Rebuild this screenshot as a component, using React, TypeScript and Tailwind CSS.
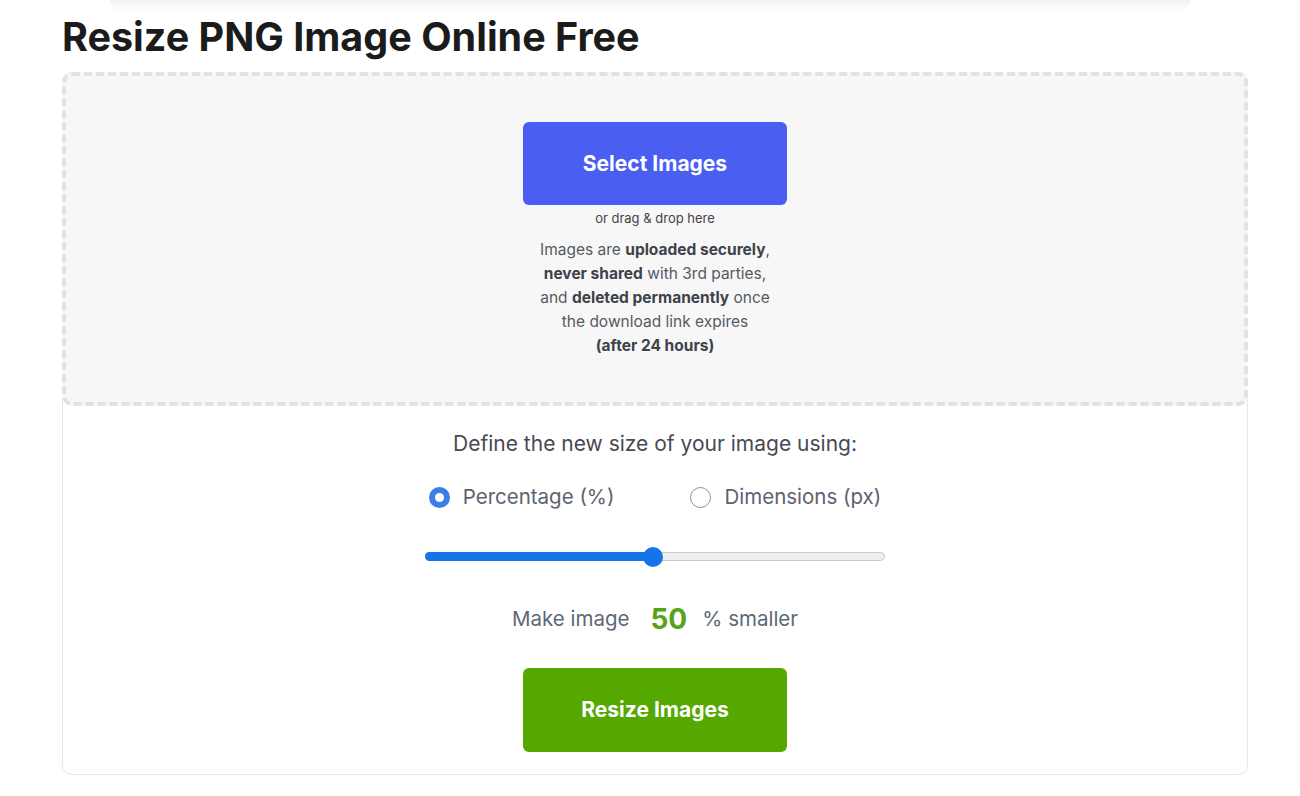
import React, { useState } from 'react';

const App: React.FC = () => {
  const [mode, setMode] = useState<'percent' | 'px'>('percent');
  const [value] = useState(50);

  return (
    <div className="min-h-[796px] bg-white font-['Inter','Liberation_Sans',sans-serif]">
      {/* shadow of the header above */}
      <div className="mx-[110px] h-[12px] rounded-b-[12px] bg-gradient-to-b from-[#f2f2f2] to-white" />

      <div className="ml-[62px] mr-[52px]">
        <h1 className="text-[39.5px] font-bold leading-[46px] text-[#1b1b1b] mt-[2px] mb-[12px]">
          Resize PNG Image Online Free
        </h1>

        <div className="rounded-[10px] border border-[#e8e8e8] bg-white">
          {/* upload zone */}
          <div className="h-[334px] -m-px rounded-[10px] border-4 border-dashed border-[#e2e2e4] bg-[#f7f7f7] flex flex-col items-center pt-[46px]">
            <button className="w-[264px] h-[83px] rounded-[6px] bg-[#4a5ff1] text-white text-[21px] font-bold">
              Select Images
            </button>
            <div className="mt-[5px] text-[13px] leading-[16px] text-[#444]">or drag &amp; drop here</div>
            <p className="mt-[12px] text-center text-[15.5px] leading-[24px] text-[#555a63]">
              Images are <b className="text-[#3e424a]">uploaded securely</b>,<br />
              <b className="text-[#3e424a]">never shared</b> with 3rd parties,<br />
              and <b className="text-[#3e424a]">deleted permanently</b> once<br />
              the download link expires<br />
              <b className="text-[#3e424a]">(after 24 hours)</b>
            </p>
          </div>

          {/* options */}
          <div className="flex flex-col items-center pt-[26px] pb-[22px]">
            <div className="text-[21px] leading-[26px] text-[#474a54]">Define the new size of your image using:</div>

            <div className="mt-[27px] flex items-center gap-[76px] text-[20.5px] leading-[26px] text-[#5d6370]">
              <label className="flex items-center gap-[13px] cursor-pointer" onClick={() => setMode('percent')}>
                {mode === 'percent' ? (
                  <span className="w-[21px] h-[21px] rounded-full bg-[#3b7de9] flex items-center justify-center">
                    <span className="w-[9px] h-[9px] rounded-full bg-white" />
                  </span>
                ) : (
                  <span className="w-[21px] h-[21px] rounded-full border border-[#8f8f8f] bg-white" />
                )}
                Percentage (%)
              </label>
              <label className="flex items-center gap-[13px] cursor-pointer" onClick={() => setMode('px')}>
                {mode === 'px' ? (
                  <span className="w-[21px] h-[21px] rounded-full bg-[#3b7de9] flex items-center justify-center">
                    <span className="w-[9px] h-[9px] rounded-full bg-white" />
                  </span>
                ) : (
                  <span className="w-[21px] h-[21px] rounded-full border border-[#8f8f8f] bg-white" />
                )}
                Dimensions (px)
              </label>
            </div>

            {/* slider */}
            <div className="mt-[42px] relative w-[460px] h-[9px] rounded-full border border-[#c9c9c9] bg-[#efefef]">
              <div className="absolute -left-px -top-px h-[9px] rounded-full bg-[#1574e8]" style={{ width: `${value}%` }} />
              <div
                className="absolute top-1/2 w-[20px] h-[20px] -translate-x-[60%] -translate-y-1/2 rounded-full bg-[#1574e8]"
                style={{ left: `${value}%` }}
              />
            </div>

            <div className="mt-[45px] flex items-center text-[20.5px] leading-[26px] text-[#5d6877]">
              <span>Make image</span>
              <span className="ml-[21px] mr-[15px] text-[28px] font-bold text-[#56a318]">{value}</span>
              <span>% smaller</span>
            </div>

            <button className="mt-[36px] w-[264px] h-[84px] rounded-[6px] bg-[#55a800] text-white text-[21px] font-bold">
              Resize Images
            </button>
          </div>
        </div>
      </div>
    </div>
  );
};

export default App;
